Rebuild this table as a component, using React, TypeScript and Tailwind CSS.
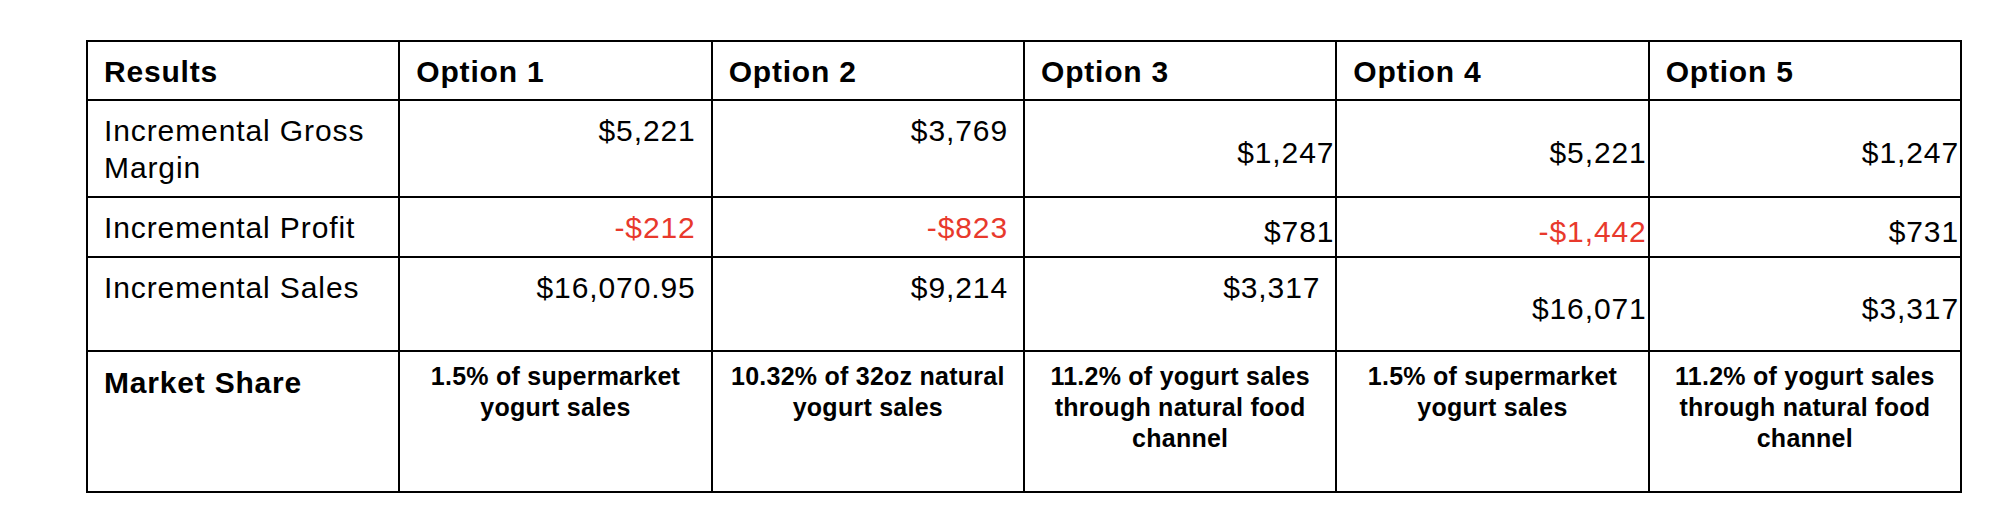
import React from "react";

type Cell = { v: string; red?: boolean; b?: boolean };

const font = { fontFamily: '"Liberation Sans", Arial, sans-serif' };

const headers = ["Results", "Option 1", "Option 2", "Option 3", "Option 4", "Option 5"];

const rows: { label: string[]; cells: Cell[] }[] = [
  {
    label: ["Incremental Gross", "Margin"],
    cells: [
      { v: "$5,221" },
      { v: "$3,769" },
      { v: "$1,247", b: true },
      { v: "$5,221", b: true },
      { v: "$1,247", b: true },
    ],
  },
  {
    label: ["Incremental Profit"],
    cells: [
      { v: "-$212", red: true },
      { v: "-$823", red: true },
      { v: "$781", b: true },
      { v: "-$1,442", red: true, b: true },
      { v: "$731", b: true },
    ],
  },
  {
    label: ["Incremental Sales"],
    cells: [
      { v: "$16,070.95" },
      { v: "$9,214" },
      { v: "$3,317" },
      { v: "$16,071", b: true },
      { v: "$3,317", b: true },
    ],
  },
];

const shares: string[][] = [
  ["1.5% of supermarket", "yogurt sales"],
  ["10.32% of 32oz natural", "yogurt sales"],
  ["11.2% of yogurt sales", "through natural food", "channel"],
  ["1.5% of supermarket", "yogurt sales"],
  ["11.2% of yogurt sales", "through natural food", "channel"],
];

export default function App() {
  return (
    <div className="min-h-[528px] w-full bg-white pt-[40px] pl-[86px]" style={font}>
      <div className="grid w-[1876px] grid-cols-6 grid-rows-[57px_95px_58px_92px_139px] gap-[2px] bg-black p-[2px] text-black">
        {headers.map((h) => (
          <div
            key={h}
            className="bg-white pl-[16px] pt-[11px] text-[30px] font-bold leading-[37px] tracking-[0.8px]"
          >
            {h}
          </div>
        ))}
        {rows.map((r) => (
          <React.Fragment key={r.label[0]}>
            <div className="bg-white pl-[16px] pt-[11px] text-[30px] leading-[37px] tracking-[0.9px]">
              {r.label.map((l) => (
                <div key={l}>{l}</div>
              ))}
            </div>
            {r.cells.map((c, i) =>
              c.b ? (
                <div
                  key={i}
                  className={`flex items-center justify-end bg-white pr-[1px] pt-[8px] text-[30px] leading-[37px] tracking-[0.9px] ${
                    c.red ? "text-[#e8392c]" : "text-black"
                  }`}
                >
                  {c.v}
                </div>
              ) : (
                <div
                  key={i}
                  className={`bg-white pr-[15px] pt-[11px] text-right text-[30px] leading-[37px] tracking-[0.9px] ${
                    c.red ? "text-[#e8392c]" : "text-black"
                  }`}
                >
                  {c.v}
                </div>
              )
            )}
          </React.Fragment>
        ))}
        <div className="bg-white pl-[16px] pt-[12px] text-[30px] font-bold leading-[37px] tracking-[0.8px]">
          Market Share
        </div>
        {shares.map((s, i) => (
          <div
            key={i}
            className="bg-white px-[4px] pt-[9px] text-center text-[25px] font-bold leading-[31px] tracking-[0.25px]"
          >
            {s.map((l, j) => (
              <div key={j}>{l}</div>
            ))}
          </div>
        ))}
      </div>
    </div>
  );
}
